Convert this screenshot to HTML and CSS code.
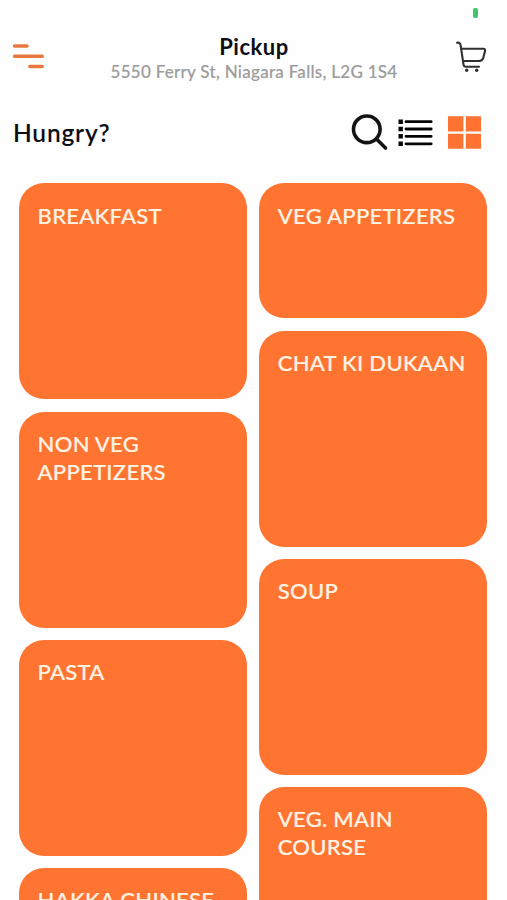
FILE: index.html
```html
<!DOCTYPE html>
<html lang="en">

<head>
  <meta charset="UTF-8">
  <title>Pickup menu</title>
  <link rel="stylesheet" href="styles.css">
</head>

<body>

  <div class="app">
    <span class="status-dot"></span>

    <header class="topbar">
      <svg class="menu-icon" width="32" height="26" viewBox="0 0 32 26">
        <path d="M2.5 2H15M2.5 12.2H30.3M17.8 22.5H30.3" />
      </svg>

      <div class="location">
        <h1>Pickup</h1>
        <p>5550 Ferry St, Niagara Falls, L2G 1S4</p>
      </div>

      <svg class="cart-icon" width="32" height="32" viewBox="0 0 32 32">
        <path d="M2 1.7C4.6 1.3 5.4 2.6 5.7 4.6L8.5 23.6Q8.9 25.8 11 25.8H24" />
        <path d="M6.3 7.8H28.3Q30.6 7.8 30 10.3L28.3 16.8Q27.4 20 24.2 20H8.2" />
        <circle cx="11.7" cy="29.2" r="1.7" />
        <circle cx="21.7" cy="29.2" r="1.7" />
      </svg>
    </header>

    <div class="toolbar">
      <h2>Hungry?</h2>

      <svg class="search-icon" width="38" height="38" viewBox="0 0 38 38">
        <circle cx="15.8" cy="15.3" r="13.3" />
        <path d="M25.5 25L34.5 34" />
      </svg>

      <svg class="list-icon" width="36" height="28" viewBox="0 0 36 28">
        <path class="bullets" d="M.5 .5h4.4v4.4H.5zM.5 7.8h4.4v4.4H.5zM.5 15.1h4.4v4.4H.5zM.5 22.6h4.4v4.4H.5z" />
        <path class="lines" d="M8 2.7H33.2M8 10H33.2M8 17.3H33.2M8 24.8H33.2" />
      </svg>

      <svg class="grid-icon" width="34" height="34" viewBox="0 0 34 34">
        <path d="M0 .2h15.4v15.2H0zM17.8 .2h15.2v15.2H17.8zM0 17.8h15.4v15H0zM17.8 17.8h15.2v15H17.8z" />
      </svg>
    </div>

    <main class="categories">
      <div class="column">
        <div class="card">BREAKFAST</div>
        <div class="card">NON VEG APPETIZERS</div>
        <div class="card">PASTA</div>
        <div class="card">HAKKA CHINESE</div>
      </div>

      <div class="column">
        <div class="card short">VEG APPETIZERS</div>
        <div class="card">CHAT KI DUKAAN</div>
        <div class="card">SOUP</div>
        <div class="card">VEG. MAIN COURSE</div>
      </div>
    </main>
  </div>

</body>

</html>
```

FILE: styles.css
```css
* {
  box-sizing: border-box;
}

body {
  margin: 0;
  font-family: Lato, "Open Sans", sans-serif;
  background-color: #fefefe;
  color: #0d0f14;
}

h1,
h2,
p {
  margin: 0;
}

svg {
  display: block;
  fill: none;
  flex: none;
}

.app {
  position: relative;
  height: 900px;
  overflow: hidden;
  padding-top: 34px;
}

/* camera in use light */
.status-dot {
  position: absolute;
  top: 8px;
  left: 473px;
  width: 5px;
  height: 10px;
  border-radius: 2px;
  background-color: #3fc66c;
}

.topbar {
  display: flex;
  height: 50px;
  padding: 0 20px 0 12px;
}

.menu-icon {
  margin-top: 10px;
  stroke: #e8783e;
  stroke-width: 3.4;
  stroke-linecap: round;
}

.location {
  flex: 1;
  padding-left: 9px;
  text-align: center;
}

.location h1 {
  font-size: 22px;
  font-weight: 700;
  line-height: 25px;
  letter-spacing: 0.5px;
}

.location p {
  font-size: 17px;
  font-weight: 500;
  line-height: 25px;
  letter-spacing: 0.28px;
  color: #9c9c9c;
  -webkit-text-stroke: 0.15px #9c9c9c;
}

.cart-icon {
  margin-top: 7px;
  stroke: #303030;
  stroke-width: 2.1;
  stroke-linecap: round;
}

.cart-icon circle {
  fill: #303030;
  stroke: none;
}

.toolbar {
  display: flex;
  align-items: center;
  height: 98px;
  padding: 0 25px 0 13px;
}

.toolbar h2 {
  flex: 1;
  padding-bottom: 2px;
  font-size: 24.5px;
  font-weight: 600;
  letter-spacing: 0.8px;
}

.search-icon {
  margin-right: 9px;
  stroke: #141414;
  stroke-width: 3.6;
  stroke-linecap: round;
}

.list-icon {
  margin-right: 14px;
}

.list-icon .bullets {
  fill: #050505;
}

.list-icon .lines {
  stroke: #050505;
  stroke-width: 2.8;
  stroke-linecap: round;
}

.grid-icon {
  fill: #ff7332;
}

.categories {
  display: flex;
  gap: 12.3px;
  padding: 1.4px 19.8px 0 19.2px;
}

.column {
  flex: 1;
  display: flex;
  flex-direction: column;
  gap: 12.2px;
}

.card {
  flex: none;
  height: 216px;
  padding: 18.4px;
  border-radius: 25px;
  background-color: #ff7431;
  color: #fff3e4;
  font-size: 22px;
  font-weight: 500;
  line-height: 28px;
  letter-spacing: 0.28px;
  -webkit-text-stroke: 0.2px #fff3e4;
}

.card.short {
  height: 135px;
}
```
